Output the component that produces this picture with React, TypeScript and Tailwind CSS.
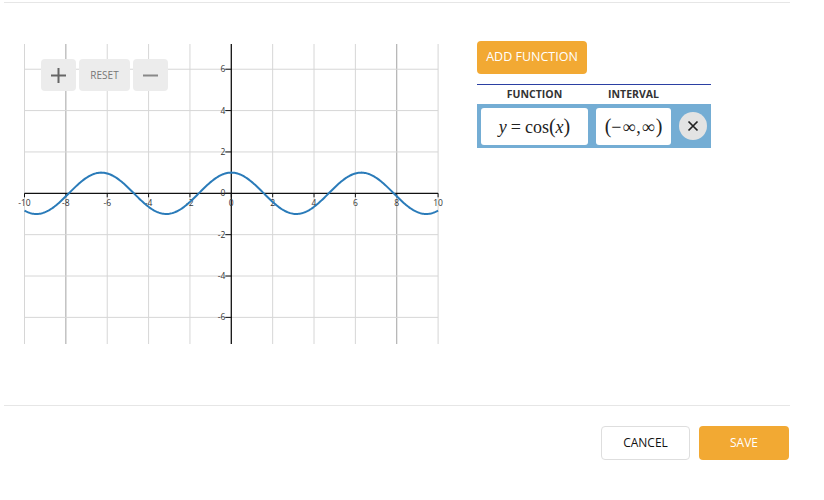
import React from "react";

const X0 = 231.3;
const Y0 = 193.3;
const S = 20.68;
const TOP = 44;
const BOTTOM = 344;
const LEFT = X0 - 10 * S;
const RIGHT = X0 + 10 * S;

const px = (x: number) => X0 + x * S;
const py = (y: number) => Y0 - y * S;

const xTicks = [-10, -8, -6, -4, -2, 0, 2, 4, 6, 8, 10];
const yTicks = [-6, -4, -2, 0, 2, 4, 6];

function curvePath() {
  const pts: string[] = [];
  for (let i = 0; i <= 400; i++) {
    const x = -10 + (20 * i) / 400;
    pts.push(`${i === 0 ? "M" : "L"}${px(x).toFixed(2)},${py(Math.cos(x)).toFixed(2)}`);
  }
  return pts.join(" ");
}

function Graph() {
  return (
    <svg width={440} height={320} viewBox="10 34 440 320" className="block">
      {/* vertical grid */}
      {xTicks.map((t) =>
        t === 0 ? null : (
          <line
            key={"v" + t}
            x1={px(t)}
            x2={px(t)}
            y1={TOP}
            y2={BOTTOM}
            stroke={t === -8 || t === 8 ? "#a3a3a3" : "#d6d6d6"}
            strokeWidth={1}
          />
        )
      )}
      {/* horizontal grid */}
      {yTicks.map((t) =>
        t === 0 ? null : (
          <line key={"h" + t} x1={LEFT} x2={RIGHT} y1={py(t)} y2={py(t)} stroke="#d6d6d6" strokeWidth={1} />
        )
      )}
      {/* axes */}
      <line x1={LEFT} x2={RIGHT} y1={Y0} y2={Y0} stroke="#111" strokeWidth={1.3} />
      <line x1={X0} x2={X0} y1={TOP} y2={BOTTOM} stroke="#111" strokeWidth={1.3} />
      {xTicks.map((t) => (
        <g key={"xt" + t}>
          <line x1={px(t)} x2={px(t)} y1={Y0} y2={Y0 + 4} stroke="#111" strokeWidth={1} />
          <text
            x={px(t)}
            y={Y0 + 13}
            textAnchor="middle"
            fontSize={8.5}
            fill="#333"
            fontFamily="'Open Sans', sans-serif"
          >
            {t}
          </text>
        </g>
      ))}
      {yTicks.map((t) => (
        <g key={"yt" + t}>
          <line x1={X0 - 6} x2={X0} y1={py(t)} y2={py(t)} stroke="#111" strokeWidth={1} />
          <text
            x={X0 - 6}
            y={py(t) + 3}
            textAnchor="end"
            fontSize={8.5}
            fill="#333"
            fontFamily="'Open Sans', sans-serif"
          >
            {t}
          </text>
        </g>
      ))}
      <path d={curvePath()} fill="none" stroke="#2a7bb9" strokeWidth={2} />
    </svg>
  );
}

function MathText({ children }: { children: React.ReactNode }) {
  return <span className="font-['Liberation_Serif',serif] text-[18px] text-[#222]">{children}</span>;
}

export default function App() {
  return (
    <div className="w-[824px] h-[500px] bg-white font-['Open_Sans',sans-serif]">
      <div className="ml-[4px] w-[786px] pt-[2px]">
        <div className="flex h-[403px] border-t border-[#e6e6e6]">
          <div className="relative ml-[6px] mt-[31px] h-[320px] w-[440px]">
            <Graph />
            <div className="absolute left-[31px] top-[25px] flex gap-[3px]">
              <button className="flex h-[32px] w-[35px] items-center justify-center rounded-[4px] bg-[#ececec]">
                <svg width="17" height="17" viewBox="0 0 17 17">
                  <path d="M8.5 1v15M1 8.5h15" stroke="#666" strokeWidth="2" />
                </svg>
              </button>
              <button className="flex h-[32px] w-[51px] items-center justify-center rounded-[4px] bg-[#ececec] text-[10px] text-[#777]">
                RESET
              </button>
              <button className="flex h-[32px] w-[35px] items-center justify-center rounded-[4px] bg-[#ececec]">
                <svg width="17" height="17" viewBox="0 0 17 17">
                  <path d="M1 8.5h15" stroke="#888" strokeWidth="2" />
                </svg>
              </button>
            </div>
          </div>

          <div className="ml-[27px] mt-[38px] w-[234px]">
            <button className="h-[33px] w-[110px] rounded-[4px] bg-[#f2a933] text-[12.5px] text-white">
              ADD FUNCTION
            </button>
            <div className="mt-[10px] border-t-[1.5px] border-[#2b40a3]">
              <div className="flex h-[19px] items-center text-[10.5px] font-bold text-[#333]">
                <div className="ml-[4px] w-[107px] text-center">FUNCTION</div>
                <div className="ml-[8px] w-[75px] text-center">INTERVAL</div>
              </div>
              <div className="flex h-[44px] items-center bg-[#74add4] pl-[4px]">
                <div className="flex h-[37px] w-[107px] items-center justify-center rounded-[3px] bg-white">
                  <MathText>
                    <i>y</i>
                    <span className="mx-[4px]">=</span>cos<span className="text-[20px]">(</span>
                    <i>x</i>
                    <span className="text-[20px]">)</span>
                  </MathText>
                </div>
                <div className="ml-[8px] flex h-[37px] w-[75px] items-center justify-center rounded-[3px] bg-white">
                  <MathText>
                    <span className="text-[20px]">(</span>
                    <span className="tracking-[1px]">−∞,∞</span>
                    <span className="text-[20px]">)</span>
                  </MathText>
                </div>
                <button className="ml-[8px] flex h-[28px] w-[28px] items-center justify-center rounded-full bg-[#e3e3e3]">
                  <svg width="12" height="12" viewBox="0 0 12 12">
                    <path d="M1.5 1.5l9 9M10.5 1.5l-9 9" stroke="#222" strokeWidth="1.7" />
                  </svg>
                </button>
              </div>
            </div>
          </div>
        </div>

        <div className="flex justify-end gap-[9px] border-t border-[#e6e6e6] pr-[1px] pt-[20px]">
          <button className="h-[34px] w-[89px] rounded-[4px] border border-[#dedede] bg-white text-[12px] text-[#111]">
            CANCEL
          </button>
          <button className="h-[34px] w-[90px] rounded-[4px] bg-[#f2a933] text-[12px] text-white">SAVE</button>
        </div>
      </div>
    </div>
  );
}
